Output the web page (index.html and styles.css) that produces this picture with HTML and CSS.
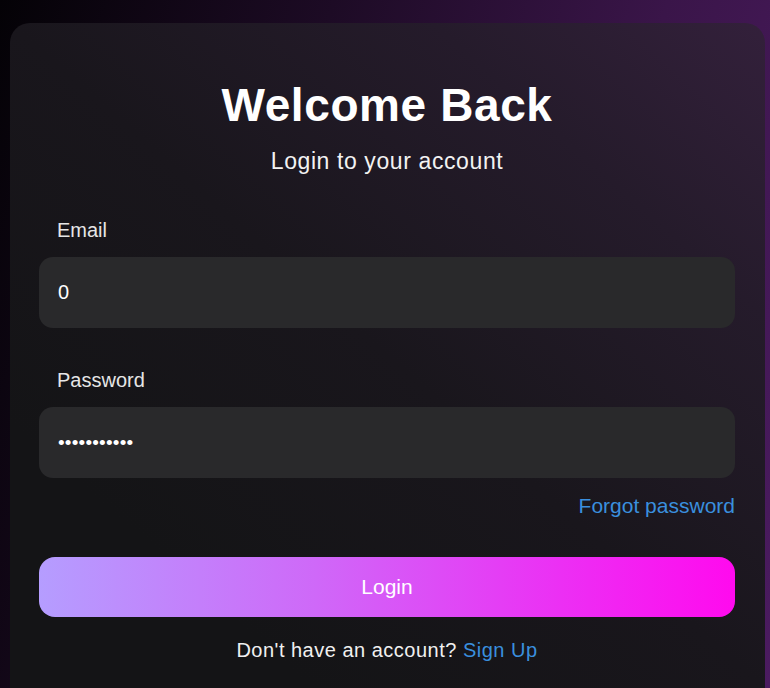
FILE: index.html
```html
<!DOCTYPE html>
<html lang="en">
<head>
    <meta charset="UTF-8">
    <meta name="viewport" content="width=device-width, initial-scale=1.0">
    <title>Login</title>
    <link rel="stylesheet" href="styles.css">
</head>
<body>
    <div class="login-card">
        <h1 class="login-title">Welcome Back</h1>
        <p class="login-subtitle">Login to your account</p>

        <form class="login-form">
            <div class="form-group">
                <label class="form-label" for="email">Email</label>
                <input class="form-input" id="email" type="text" value="0">
            </div>
            <div class="form-group">
                <label class="form-label" for="password">Password</label>
                <input class="form-input" id="password" type="password" value="secretpass1">
            </div>
            <div class="form-forgot">
                <a href="#" class="link">Forgot password</a>
            </div>
            <button type="button" class="login-btn">Login</button>
        </form>

        <p class="login-footer">Don't have an account? <a href="#" class="link">Sign Up</a></p>
    </div>
</body>
</html>
```

FILE: styles.css
```css
* {
    margin: 0;
    padding: 0;
    box-sizing: border-box;
}

html, body {
    height: 100%;
}

body {
    font-family: "Liberation Sans", Arial, sans-serif;
    background: linear-gradient(105deg, #040206 0%, #1d0b25 35%, #3a1549 70%, #4b1b60 100%);
    color: #fff;
    padding: 23px 5px 0 10px;
    overflow: hidden;
}

/* card runs off the bottom of the window, so only the top corners are round */
.login-card {
    width: 755px;
    height: 100%;
    border-radius: 20px 20px 0 0;
    padding: 54px 30px 0 29px;
    background: linear-gradient(to bottom left, #33203b 0%, #251b2b 22%, #19161c 50%, #141416 80%);
}

.login-title {
    font-size: 46px;
    line-height: 56px;
    font-weight: bold;
    text-align: center;
    letter-spacing: 0.6px;
}

.login-subtitle {
    margin-top: 13px;
    font-size: 23px;
    line-height: 30px;
    text-align: center;
    color: #f2f2f2;
    letter-spacing: 0.6px;
}

.login-form {
    margin-top: 42px;
    display: flex;
    flex-direction: column;
}

.form-group {
    display: flex;
    flex-direction: column;
    gap: 15px;
    margin-bottom: 40px;
}

.form-group:nth-child(2) {
    margin-bottom: 16px;
}

.form-label {
    padding-left: 18px;
    font-size: 20px;
    line-height: 24px;
    color: #e6e6e6;
}

.form-input {
    height: 71px;
    border: none;
    outline: none;
    border-radius: 14px;
    background: #29292b;
    color: #fff;
    font-family: inherit;
    font-size: 20px;
    padding: 0 19px;
}

#password {
    font-size: 19px;
    letter-spacing: 0.2px;
}

.form-forgot {
    text-align: right;
    font-size: 21px;
    line-height: 24px;
}

.link {
    color: #3a8fde;
    text-decoration: none;
}

.login-btn {
    margin-top: 39px;
    height: 60px;
    border: none;
    border-radius: 16px;
    background: linear-gradient(90deg, #b59dff 0%, #cf68f8 40%, #ec2ff4 75%, #ff0aee 100%);
    color: #fff;
    font-family: inherit;
    font-size: 21px;
    cursor: pointer;
}

.login-footer {
    margin-top: 21px;
    font-size: 20px;
    line-height: 24px;
    text-align: center;
    color: #f0f0f0;
    letter-spacing: 0.5px;
}
```
